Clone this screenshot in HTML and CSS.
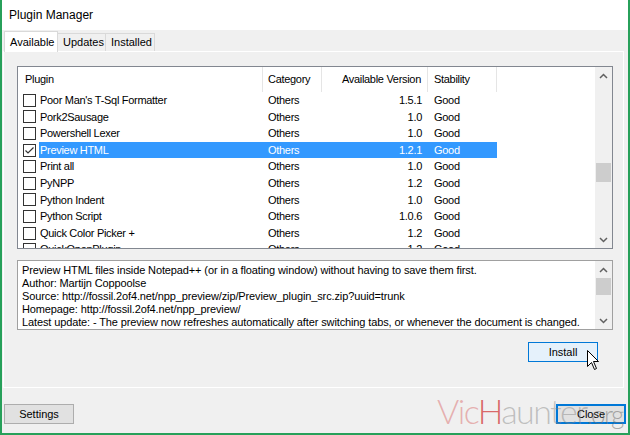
FILE: index.html
```html
<!DOCTYPE html>
<html lang="en">

<head>
    <meta charset="UTF-8">
    <meta name="viewport" content="width=device-width, initial-scale=1.0">
    <title>Plugin Manager</title>

    <link rel="stylesheet" href="styles.css">

</head>

<body>

    <div class="janela">

        <div class="titulo">Plugin Manager</div>

        <div class="abas">
            <div class="aba ativa">Available</div>
            <div class="aba">Updates</div>
            <div class="aba">Installed</div>
        </div>

        <div class="painel">

            <div class="lista">
                <div class="conteudo">
                    <div class="cabecalho">
                        <div class="col nome">Plugin</div>
                        <div class="col cat">Category</div>
                        <div class="col ver">Available Version</div>
                        <div class="col est">Stability</div>
                    </div>
                    <div class="linha">
                        <div class="chk"><span class="caixa"></span></div>
                        <div class="nome">Poor Man's T-Sql Formatter</div>
                        <div class="cat">Others</div>
                        <div class="ver">1.5.1</div>
                        <div class="est">Good</div>
                    </div>
                    <div class="linha">
                        <div class="chk"><span class="caixa"></span></div>
                        <div class="nome">Pork2Sausage</div>
                        <div class="cat">Others</div>
                        <div class="ver">1.0</div>
                        <div class="est">Good</div>
                    </div>
                    <div class="linha">
                        <div class="chk"><span class="caixa"></span></div>
                        <div class="nome">Powershell Lexer</div>
                        <div class="cat">Others</div>
                        <div class="ver">1.0</div>
                        <div class="est">Good</div>
                    </div>
                    <div class="linha selecionada">
                        <div class="chk"><span class="caixa">
                            <svg width="11" height="11" viewBox="0 0 11 11"><polyline points="1.5,5.5 4,8 9.5,2.5" fill="none" stroke="#333" stroke-width="1.2"/></svg>
                        </span></div>
                        <div class="nome">Preview HTML</div>
                        <div class="cat">Others</div>
                        <div class="ver">1.2.1</div>
                        <div class="est">Good</div>
                    </div>
                    <div class="linha">
                        <div class="chk"><span class="caixa"></span></div>
                        <div class="nome">Print all</div>
                        <div class="cat">Others</div>
                        <div class="ver">1.0</div>
                        <div class="est">Good</div>
                    </div>
                    <div class="linha">
                        <div class="chk"><span class="caixa"></span></div>
                        <div class="nome">PyNPP</div>
                        <div class="cat">Others</div>
                        <div class="ver">1.2</div>
                        <div class="est">Good</div>
                    </div>
                    <div class="linha">
                        <div class="chk"><span class="caixa"></span></div>
                        <div class="nome">Python Indent</div>
                        <div class="cat">Others</div>
                        <div class="ver">1.0</div>
                        <div class="est">Good</div>
                    </div>
                    <div class="linha">
                        <div class="chk"><span class="caixa"></span></div>
                        <div class="nome">Python Script</div>
                        <div class="cat">Others</div>
                        <div class="ver">1.0.6</div>
                        <div class="est">Good</div>
                    </div>
                    <div class="linha">
                        <div class="chk"><span class="caixa"></span></div>
                        <div class="nome">Quick Color Picker +</div>
                        <div class="cat">Others</div>
                        <div class="ver">1.2</div>
                        <div class="est">Good</div>
                    </div>
                    <div class="linha">
                        <div class="chk"><span class="caixa"></span></div>
                        <div class="nome">QuickOpenPlugin</div>
                        <div class="cat">Others</div>
                        <div class="ver">1.2</div>
                        <div class="est">Good</div>
                    </div>
                </div>
                <div class="rolagem">
                    <div class="seta"><svg width="9" height="6" viewBox="0 0 9 6"><polyline points="1,5 4.5,1.5 8,5" fill="none" stroke="#606060" stroke-width="1.5"/></svg></div>
                    <div class="trilho"><div class="polegar lista-polegar"></div></div>
                    <div class="seta"><svg width="9" height="6" viewBox="0 0 9 6"><polyline points="1,1 4.5,4.5 8,1" fill="none" stroke="#606060" stroke-width="1.5"/></svg></div>
                </div>
            </div>

            <div class="descricao">
                <div class="texto">
                    <div>Preview HTML files inside Notepad++ (or in a floating window) without having to save them first.</div>
                    <div>Author: Martijn Coppoolse</div>
                    <div>Source: http://fossil.2of4.net/npp_preview/zip/Preview_plugin_src.zip?uuid=trunk</div>
                    <div>Homepage: http://fossil.2of4.net/npp_preview/</div>
                    <div>Latest update: - The preview now refreshes automatically after switching tabs, or whenever the document is changed.</div>
                </div>
                <div class="rolagem">
                    <div class="seta"><svg width="9" height="6" viewBox="0 0 9 6"><polyline points="1,5 4.5,1.5 8,5" fill="none" stroke="#606060" stroke-width="1.5"/></svg></div>
                    <div class="trilho"><div class="polegar desc-polegar"></div></div>
                    <div class="seta"><svg width="9" height="6" viewBox="0 0 9 6"><polyline points="1,1 4.5,4.5 8,1" fill="none" stroke="#606060" stroke-width="1.5"/></svg></div>
                </div>
            </div>

            <div class="botao instalar">Install</div>

        </div>

        <div class="rodape">
            <div class="botao">Settings</div>
            <div class="botao padrao">Close</div>
        </div>

        <!-- marca d'agua por cima do botao Close -->
        <div class="marca"><span class="vic">Vic</span><span class="h">H</span><span class="aunter">aunter</span><span class="org">.org</span></div>

        <svg class="cursor" width="13" height="21" viewBox="0 0 13 21">
            <path d="M0.5 0.5 L0.5 16.5 L4.5 12.5 L7.5 19.5 L9.5 18.5 L6.5 11.5 L11.5 11.5 Z" fill="#fff" stroke="#000" stroke-width="1"/>
        </svg>

    </div>

</body>

</html>
```

FILE: styles.css
```css
body {
    margin: 0;
    font-family: "Liberation Sans", Arial, sans-serif;
    font-size: 11px;
    color: #000;
}

.janela {
    position: relative;
    width: 630px;
    height: 435px;
    box-sizing: border-box;
    border-left: 2px solid #27a05a;
    border-right: 2px solid #27a05a;
    border-bottom: 2px solid #27a05a;
    background-color: #f0f0f0;
    display: flex;
    flex-direction: column;
    overflow: hidden;
}

.titulo {
    height: 30px;
    background-color: #fff;
    padding-left: 7px;
    line-height: 30px;
    font-size: 12px;
}

.abas {
    height: 21px;
    display: flex;
    align-items: flex-end;
    padding-left: 2px;
}

.aba {
    height: 18px;
    box-sizing: border-box;
    border: 1px solid #d9d9d9;
    border-bottom: none;
    padding: 0 5px;
    line-height: 17px;
    margin-right: -1px;
}

.aba.ativa {
    height: 21px;
    background-color: #fff;
    padding: 2px 5px 0 5px;
    position: relative;
    z-index: 1;
    margin-bottom: -1px;
}

.aba:nth-child(2) {
    width: 49px;
}

.aba:nth-child(3) {
    width: 50px;
}

.aba.ativa {
    width: 54px;
}

.painel {
    margin-left: 1px;
    width: 621px;
    height: 337px;
    box-sizing: border-box;
    border: 1px solid #fff;
    padding: 14px 10px 0 13px;
    display: flex;
    flex-direction: column;
}

.lista {
    height: 183px;
    box-sizing: border-box;
    border: 1px solid #828790;
    background-color: #fff;
    display: flex;
}

.conteudo {
    flex: 1;
    overflow: hidden;
    letter-spacing: -0.3px;
}

.cabecalho {
    height: 25px;
    display: grid;
    grid-template-columns: 245px 59px 106px 69px;
    align-items: center;
}

.cabecalho .col {
    height: 100%;
    line-height: 25px;
    border-right: 1px solid #e5e5e5;
    box-sizing: border-box;
}

.cabecalho .nome {
    padding-left: 7px;
}

.linha {
    height: 16.6px;
    display: grid;
    grid-template-columns: 21px 224px 59px 106px 69px;
    line-height: 16.6px;
}

.linha .nome,
.linha .cat,
.linha .est,
.cabecalho .cat,
.cabecalho .est {
    white-space: nowrap;
}

.linha .nome {
    padding-left: 1px;
}

.cat {
    padding-left: 5px;
}

.ver {
    text-align: right;
    padding-right: 6px;
}

.est {
    padding-left: 6px;
}

.chk {
    display: flex;
    align-items: center;
    padding-left: 5px;
}

.caixa {
    width: 13px;
    height: 13px;
    box-sizing: border-box;
    border: 1px solid #333;
    background-color: #fff;
    display: flex;
    align-items: center;
    justify-content: center;
}

.selecionada .nome,
.selecionada .cat,
.selecionada .ver,
.selecionada .est {
    background-color: #3399ff;
    color: #fff;
}

.rolagem {
    width: 17px;
    background-color: #f0f0f0;
    display: flex;
    flex-direction: column;
}

.seta {
    height: 17px;
    display: flex;
    align-items: center;
    justify-content: center;
}

.trilho {
    flex: 1;
}

.polegar {
    background-color: #cdcdcd;
    margin: 0 1px;
}

.lista-polegar {
    margin-top: 79px;
    height: 19px;
}

.desc-polegar {
    height: 17px;
}

.descricao {
    margin-top: 11px;
    height: 70px;
    box-sizing: border-box;
    border: 1px solid #a0a0a0;
    background-color: #fff;
    display: flex;
}

.texto {
    flex: 1;
    padding: 3px 0 0 4px;
    line-height: 13px;
    letter-spacing: -0.12px;
    white-space: nowrap;
    overflow: hidden;
}

.botao {
    width: 70px;
    height: 20px;
    box-sizing: border-box;
    border: 1px solid #adadad;
    background-color: #e1e1e1;
    text-align: center;
    line-height: 18px;
}

.instalar {
    align-self: flex-end;
    margin: 12px 15px 0 0;
    background-color: #e5f1fb;
    border-color: #0078d7;
}

.rodape {
    flex: 1;
    display: flex;
    justify-content: space-between;
    padding: 16px 2px 0 2px;
}

.padrao {
    border: 2px solid #0078d7;
    line-height: 16px;
}

.marca {
    position: absolute;
    left: 435px;
    top: 390px;
    font-family: Lato, sans-serif;
    font-weight: 300;
    font-size: 34px;
    white-space: nowrap;
    letter-spacing: -1.6px;
}

.vic {
    color: rgba(220, 120, 120, 0.55);
}

.h {
    color: rgba(210, 60, 60, 0.75);
}

.aunter {
    color: rgba(130, 130, 130, 0.45);
}

.org {
    color: rgba(110, 110, 110, 0.55);
    font-size: 26px;
}

.cursor {
    position: absolute;
    left: 585px;
    top: 350px;
}
```
